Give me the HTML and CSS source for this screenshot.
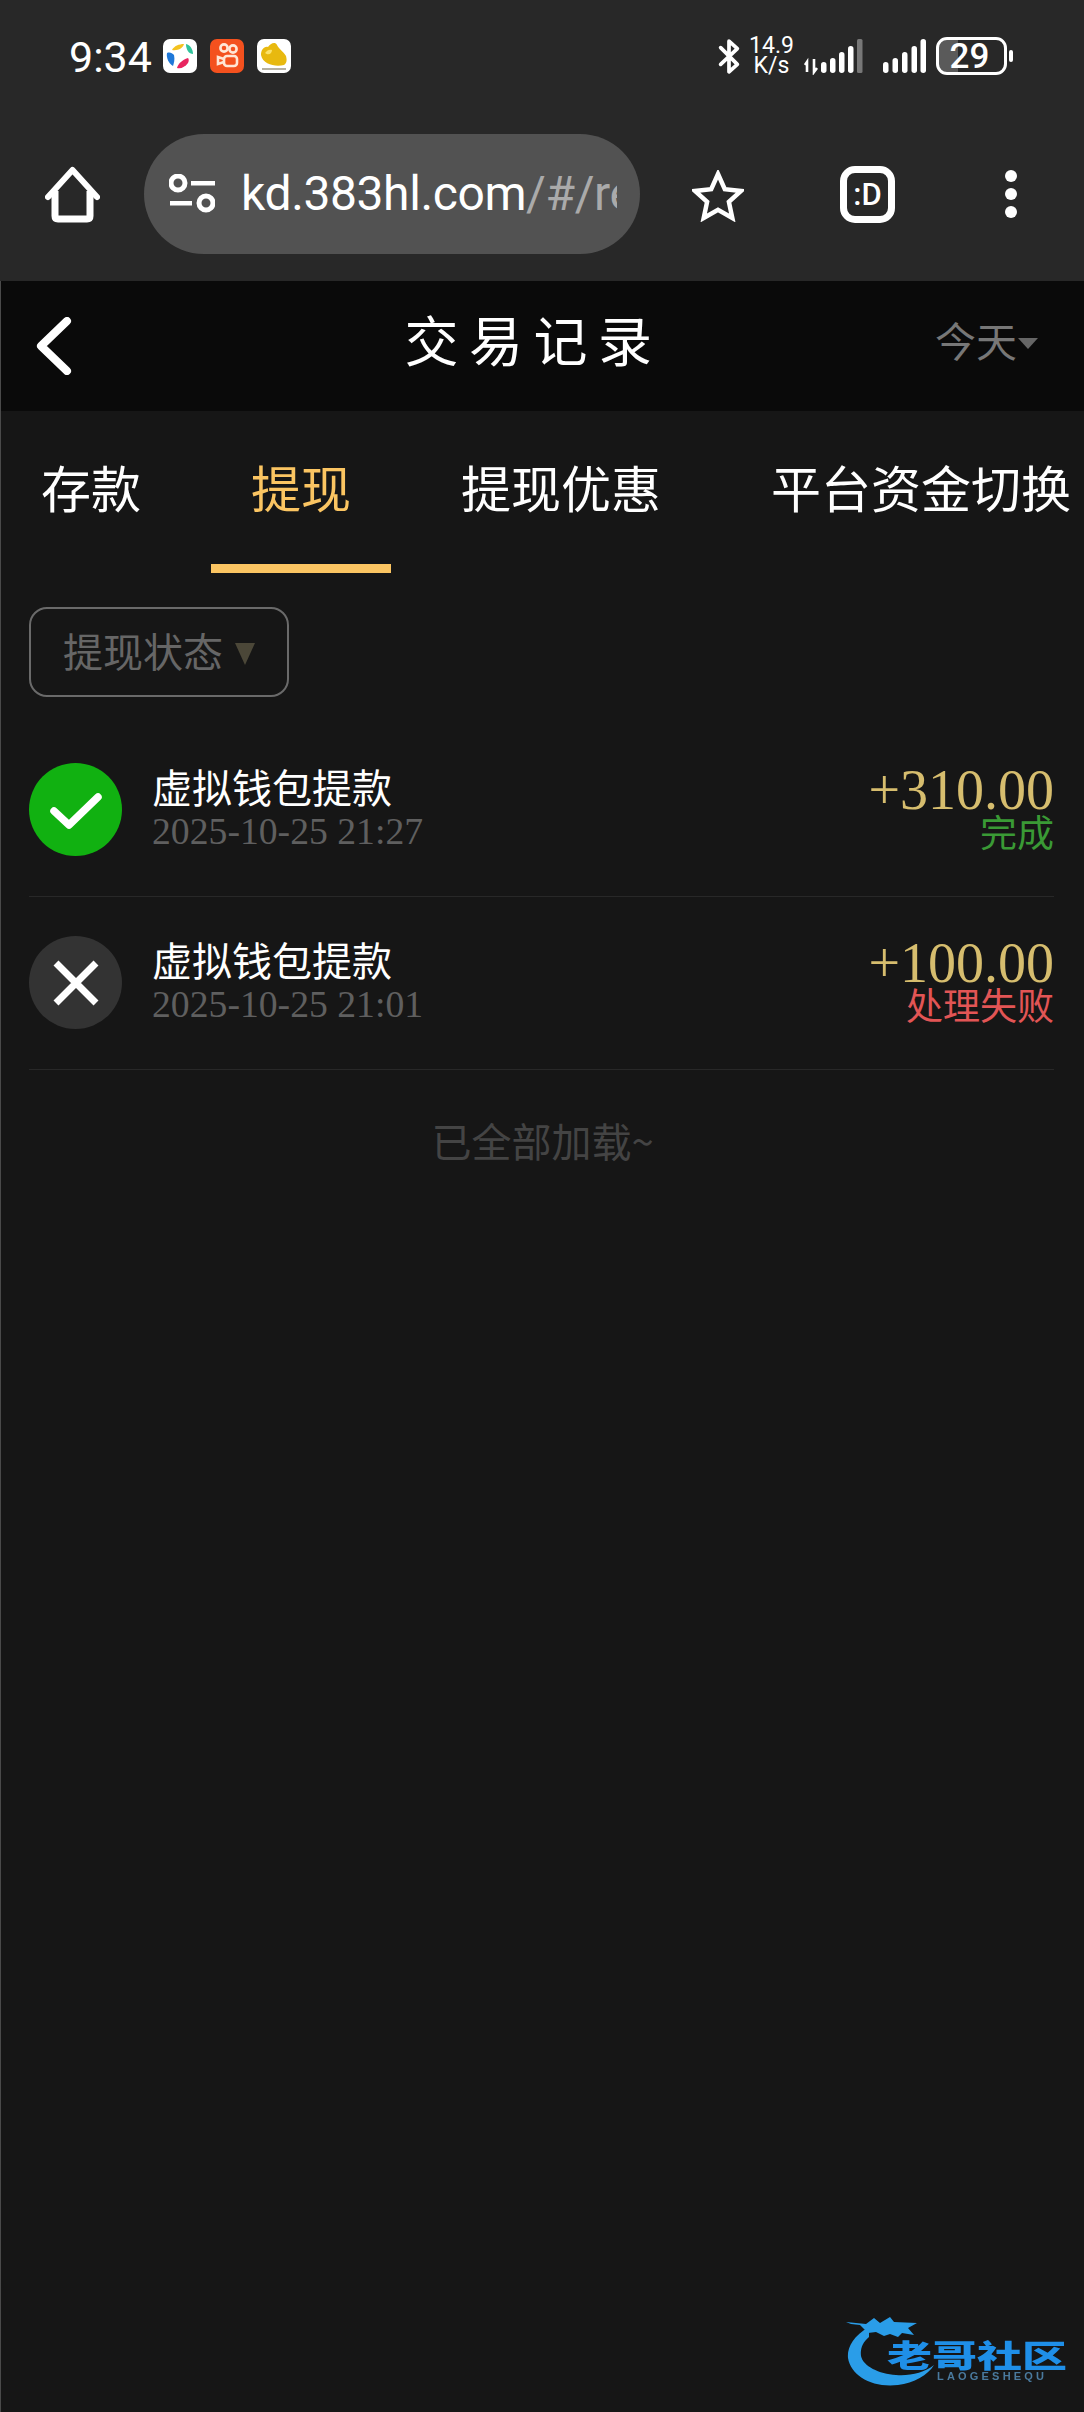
FILE: index.html
```html
<!DOCTYPE html>
<html lang="zh-CN">
<head>
<meta charset="utf-8">
<title>交易记录</title>
<link rel="stylesheet" href="styles.css">
</head>
<body>
<div class="chrome">
  <div class="statusbar">
    <span class="time">9:34</span>
    <svg class="app app-first" viewBox="0 0 34 34"><rect width="34" height="34" rx="7" fill="#fff"/><path d="M9 11c2-4 7-6 12-6-1 4-6 7-12 6z" fill="#f4c21f"/><path d="M23 5c4 1 7 5 7 10-4 0-7-4-7-10z" fill="#2fc39b"/><path d="M4 14c3-1 5 0 7 2 1 4 0 8-1 11-4-2-7-8-6-13z" fill="#1f78d8"/><path d="M14 29c1-4 5-8 11-10 1 1 1 3 0 5-3 4-7 6-11 5z" fill="#e8245f"/></svg>
    <svg class="app" viewBox="0 0 34 34"><rect width="34" height="34" rx="7" fill="#f4511e"/><g fill="none" stroke="#ffe6d5" stroke-width="2.600"><circle cx="14" cy="9" r="3.600"/><circle cx="23" cy="10" r="3.600"/><rect x="14" y="17" width="13" height="10" rx="3"/><path d="M14 20l-6-2v7l6-2"/></g></svg>
    <svg class="app" viewBox="0 0 34 34"><rect width="34" height="34" rx="7" fill="#fff"/><path d="M4 16c0-5 3-9 7-8 2-3 7-6 9-2 2 4 6 6 9 11 1 4 1 7-2 9-8 2-21 0-23-10z" fill="#e8b90f"/><path d="M8 14c2-3 5-4 7-3 0 3-3 6-7 3z" fill="#fbe26a"/><rect x="5" y="29" width="24" height="2" fill="#b5b0a0"/></svg>
    <span class="status-fill"></span>
    <svg class="bt" viewBox="0 0 28 38"><path d="M5 10l18 18-9 8V3l9 8L5 28" fill="none" stroke="#fff" stroke-width="4" stroke-linejoin="round" stroke-linecap="round"/></svg>
    <span class="speed"><span>14.9</span><span>K/s</span></span>
    <svg class="sig-a" viewBox="0 0 60 37"><path d="M4 34V24l-2 3M11 21v13l3-4" fill="none" stroke="#fff" stroke-width="2.600"/><g fill="#fff"><rect x="18" y="24" width="5.500" height="11" rx="2.700"/><rect x="27" y="20" width="5.500" height="15" rx="2.700"/><rect x="36" y="14" width="5.500" height="21" rx="2.700"/><rect x="45" y="8" width="5.500" height="27" rx="2.700"/></g><rect x="54" y="1" width="5.500" height="34" rx="1.500" fill="#777"/></svg>
    <svg class="sig-b" viewBox="0 0 43 37"><g fill="#fff"><rect x="0" y="24" width="5.500" height="11" rx="2.700"/><rect x="9.500" y="20" width="5.500" height="15" rx="2.700"/><rect x="19" y="14" width="5.500" height="21" rx="2.700"/><rect x="28.500" y="8" width="5.500" height="27" rx="2.700"/><rect x="37.500" y="1" width="5.500" height="34" rx="2.700"/></g></svg>
    <span class="battery">29</span>
    <span class="battery-nub"></span>
  </div>
  <div class="toolbar">
    <svg class="home" viewBox="0 0 55 57"><path d="M3 31L27.500 4 52 31" fill="none" stroke="#fff" stroke-width="6" stroke-linecap="round" stroke-linejoin="round"/><path d="M10 25v25q0 3 3 3h29q3 0 3-3V25" fill="none" stroke="#fff" stroke-width="7"/></svg>
    <div class="pill">
      <svg class="tune" viewBox="0 0 46 40"><g fill="none" stroke="#fff" stroke-width="5"><circle cx="9" cy="9" r="7"/><circle cx="37" cy="29" r="7"/></g><rect x="22" y="7" width="24" height="4.500" fill="#fff"/><rect x="1" y="27" width="22" height="4.500" fill="#fff"/></svg>
      <div class="url"><span class="url-host">kd.383hl.com</span><span class="url-path">/#/record</span></div>
    </div>
    <svg class="star" viewBox="0 0 52 52"><path d="M26 4l6.800 15.200 16.200 1.700-12.100 11 3.400 16.100L26 39.800 11.700 48l3.400-16.100L3 20.900l16.200-1.700z" fill="none" stroke="#fff" stroke-width="4.500" stroke-linejoin="miter"/></svg>
    <div class="dbox">:D</div>
    <div class="dots"><i></i><i></i><i></i></div>
  </div>
</div>
<div class="page">
  <header class="head">
    <svg class="back" viewBox="0 0 36 58"><path d="M31 4L5 29l26 25" fill="none" stroke="#fff" stroke-width="8" stroke-linecap="round" stroke-linejoin="round"/></svg>
    <h1 class="title">交易记录</h1>
    <div class="range">今天<span class="range-caret"></span></div>
  </header>
  <nav class="tabs">
    <div class="tab">存款</div>
    <div class="tab active">提现</div>
    <div class="tab">提现优惠</div>
    <div class="tab">平台资金切换</div>
  </nav>
  <div class="filter-row">
    <div class="filter">提现状态<span class="filter-caret"></span></div>
  </div>
  <ul class="list">
    <li class="row">
      <span class="badge ok"><svg viewBox="0 0 93 93"><path d="M25 48l15 14 29-28" fill="none" stroke="#fff" stroke-width="7.500" stroke-linecap="round" stroke-linejoin="round"/></svg></span>
      <div class="info"><div class="name">虚拟钱包提款</div><div class="date">2025-10-25 21:27</div></div>
      <div class="money"><div class="amount">+310.00</div><div class="state done">完成</div></div>
    </li>
    <li class="row">
      <span class="badge fail"><svg viewBox="0 0 93 93"><path d="M27 27l40 40M67 27L27 67" fill="none" stroke="#fff" stroke-width="7"/></svg></span>
      <div class="info"><div class="name">虚拟钱包提款</div><div class="date">2025-10-25 21:01</div></div>
      <div class="money"><div class="amount">+100.00</div><div class="state failed">处理失败</div></div>
    </li>
  </ul>
  <div class="end">已全部加载~</div>
</div>
<div class="mark">
  <svg class="mark-art" viewBox="0 0 90 80"><path d="M24 15C8 24 2 36 3 46c3 18 24 30 50 27 16-2 30-10 36-20-10 8-24 11-38 10C34 62 18 54 16 44c-1-8 2-14 8-19z" fill="#2a9de8"/><path d="M1 10l20 2 8-6 6 5 10-6 4 5 23 1-9 5 6 7-12-2-4 4-8-3-6 2-8-4-8 1-8-8-9-1z" fill="#2a9de8"/></svg>
  <div class="mark-name">老哥社区</div>
  <div class="mark-sub">LAOGESHEQU</div>
</div>
</body>
</html>
```
FILE: styles.css
```css
* { box-sizing: border-box; }
html, body { margin: 0; padding: 0; }
body {
  position: relative;
  width: 1084px;
  height: 2412px;
  overflow: hidden;
  background: #161616;
  color: #fff;
  font-family: "Noto Sans CJK SC", "Noto Sans", sans-serif;
}
.chrome { height: 281px; background: #282828; }
.statusbar {
  display: flex;
  align-items: center;
  height: 114px;
  padding: 0 71px 2px 69px;
}
.time { font: 400 43px/1 Roboto, sans-serif; width: 94px; padding-top: 3px; }
.app { width: 34px; height: 34px; margin-right: 13px; flex: none; }
.status-fill { flex: 1; }
.bt { width: 26px; height: 38px; margin-right: 9px; }
.speed {
  display: flex;
  flex-direction: column;
  align-items: center;
  width: 41px;
  margin-right: 11px;
  font: 400 23px/20px Roboto, sans-serif;
}
.sig-a { width: 60px; height: 37px; margin-right: 20px; }
.sig-b { width: 43px; height: 37px; margin-right: 10px; }
.battery {
  display: flex;
  align-items: center;
  justify-content: center;
  width: 71px;
  height: 38px;
  padding-right: 4px;
  border: 3px solid #fff;
  border-radius: 11px;
  background: linear-gradient(90deg, #5a5a5a 30%, transparent 30%);
  font: 500 35px/1 Roboto, sans-serif;
}
.battery-nub { width: 4px; height: 12px; margin-left: 2px; background: #fff; border-radius: 2px; }
.toolbar {
  display: flex;
  align-items: center;
  height: 120px;
  margin-top: 20px;
  padding-left: 45px;
}
.home { width: 55px; height: 57px; margin-right: 44px; }
.pill {
  display: flex;
  align-items: center;
  width: 496px;
  height: 120px;
  padding: 0 23px 0 25px;
  border-radius: 60px;
  background: #525252;
}
.tune { width: 46px; height: 40px; margin-right: 26px; flex: none; }
.url { flex: 1; min-width: 0; overflow: hidden; white-space: nowrap; font: 400 48px/1.100 Roboto, sans-serif; letter-spacing: -0.4px; }
.url-path { color: #aaa; }
.star { width: 52px; height: 52px; margin-left: 52px; margin-top: 4px; }
.dbox {
  display: flex;
  align-items: center;
  justify-content: center;
  width: 55px;
  height: 57px;
  margin-left: 96px;
  border: 7px solid #fff;
  border-radius: 15px;
  font: 500 31px/1 Roboto, sans-serif;
}
.dots { display: flex; flex-direction: column; gap: 6px; margin-left: 110px; }
.dots i { display: block; width: 12px; height: 12px; border-radius: 50%; background: #fff; }
.page { min-height: 2131px; border-left: 1px solid #4a4a4a; }
.head {
  position: relative;
  display: flex;
  align-items: center;
  justify-content: space-between;
  height: 130px;
  padding: 0 46px 0 35px;
  background: #0a0a0a;
}
.back { width: 36px; height: 58px; }
.title {
  position: absolute;
  left: 0;
  right: 18px;
  top: 28px;
  margin: 0;
  text-align: center;
  font-size: 54px;
  font-weight: 400;
  letter-spacing: 10.500px;
  line-height: 60px;
}
.range { display: flex; align-items: center; color: #777; font-size: 41px; line-height: 1; padding-bottom: 14px; }
.range-caret {
  width: 0;
  height: 0;
  margin-top: 8px;
  margin-left: 1px;
  border: 10px solid transparent;
  border-top: 11px solid #666;
  border-bottom: 0;
}
.tabs {
  display: flex;
  gap: 30px;
  height: 162px;
  overflow: hidden;
}
.tab {
  flex: none;
  padding: 0 40px;
  height: 162px;
  font-size: 50px;
  line-height: 151px;
  white-space: nowrap;
}
.tab.active { color: #fbc562; border-bottom: 9px solid #fbc562; }
.filter-row { display: flex; padding: 34px 0 0 28px; }
.filter {
  display: flex;
  align-items: center;
  height: 90px;
  padding: 0 32px 4px;
  border: 2px solid #6a6a6a;
  border-radius: 18px;
  color: #666;
  font-size: 40px;
  line-height: 1;
  white-space: nowrap;
}
.filter-caret {
  width: 0;
  height: 0;
  margin-left: 12px;
  margin-top: 8px;
  border: 10px solid transparent;
  border-top: 22px solid #4b4738;
  border-bottom: 0;
}
.list { list-style: none; margin: 27px 30px 0 28px; padding: 0; }
.row {
  display: flex;
  align-items: center;
  height: 173px;
  padding-bottom: 1px;
  border-bottom: 1px solid #282828;
}
.badge { display: block; width: 93px; height: 93px; border-radius: 50%; flex: none; }
.badge svg { display: block; width: 93px; height: 93px; }
.ok { background: #11b111; }
.fail { background: #333; }
.info { flex: 1; margin-left: 30px; padding-bottom: 6px; }
.name { font-size: 40px; line-height: 44px; margin-bottom: 4px; }
.date { color: #5f5f5f; font: 400 37.700px/38px "Liberation Serif", serif; }
.money { text-align: right; padding-bottom: 12px; }
.amount { color: #d6bd6e; font: 400 56px/57px "Liberation Serif", serif; }
.state { font-size: 37px; line-height: 30px; margin-top: -3px; }
.done { color: #3a9a35; }
.failed { color: #e25555; }
.end { margin-top: 46px; text-align: center; color: #444; font-size: 40px; line-height: 48px; }
.mark {
  position: absolute;
  left: 845px;
  top: 2312px;
  width: 230px;
  height: 90px;
  color: #1f8fe8;
  filter: blur(0.600px);
}
.mark-art { position: absolute; left: 0; top: 0; width: 90px; height: 80px; }
.mark-name {
  position: absolute;
  left: 42px;
  top: 17px;
  font-size: 45px;
  font-weight: 900;
  line-height: 50px;
  white-space: nowrap;
  transform: scaleY(0.680);
}
.mark-sub {
  position: absolute;
  left: 92px;
  top: 57px;
  color: #4a7a9e;
  font: 700 11px/14px "Liberation Sans", sans-serif;
  letter-spacing: 3.200px;
  white-space: nowrap;
}
```
